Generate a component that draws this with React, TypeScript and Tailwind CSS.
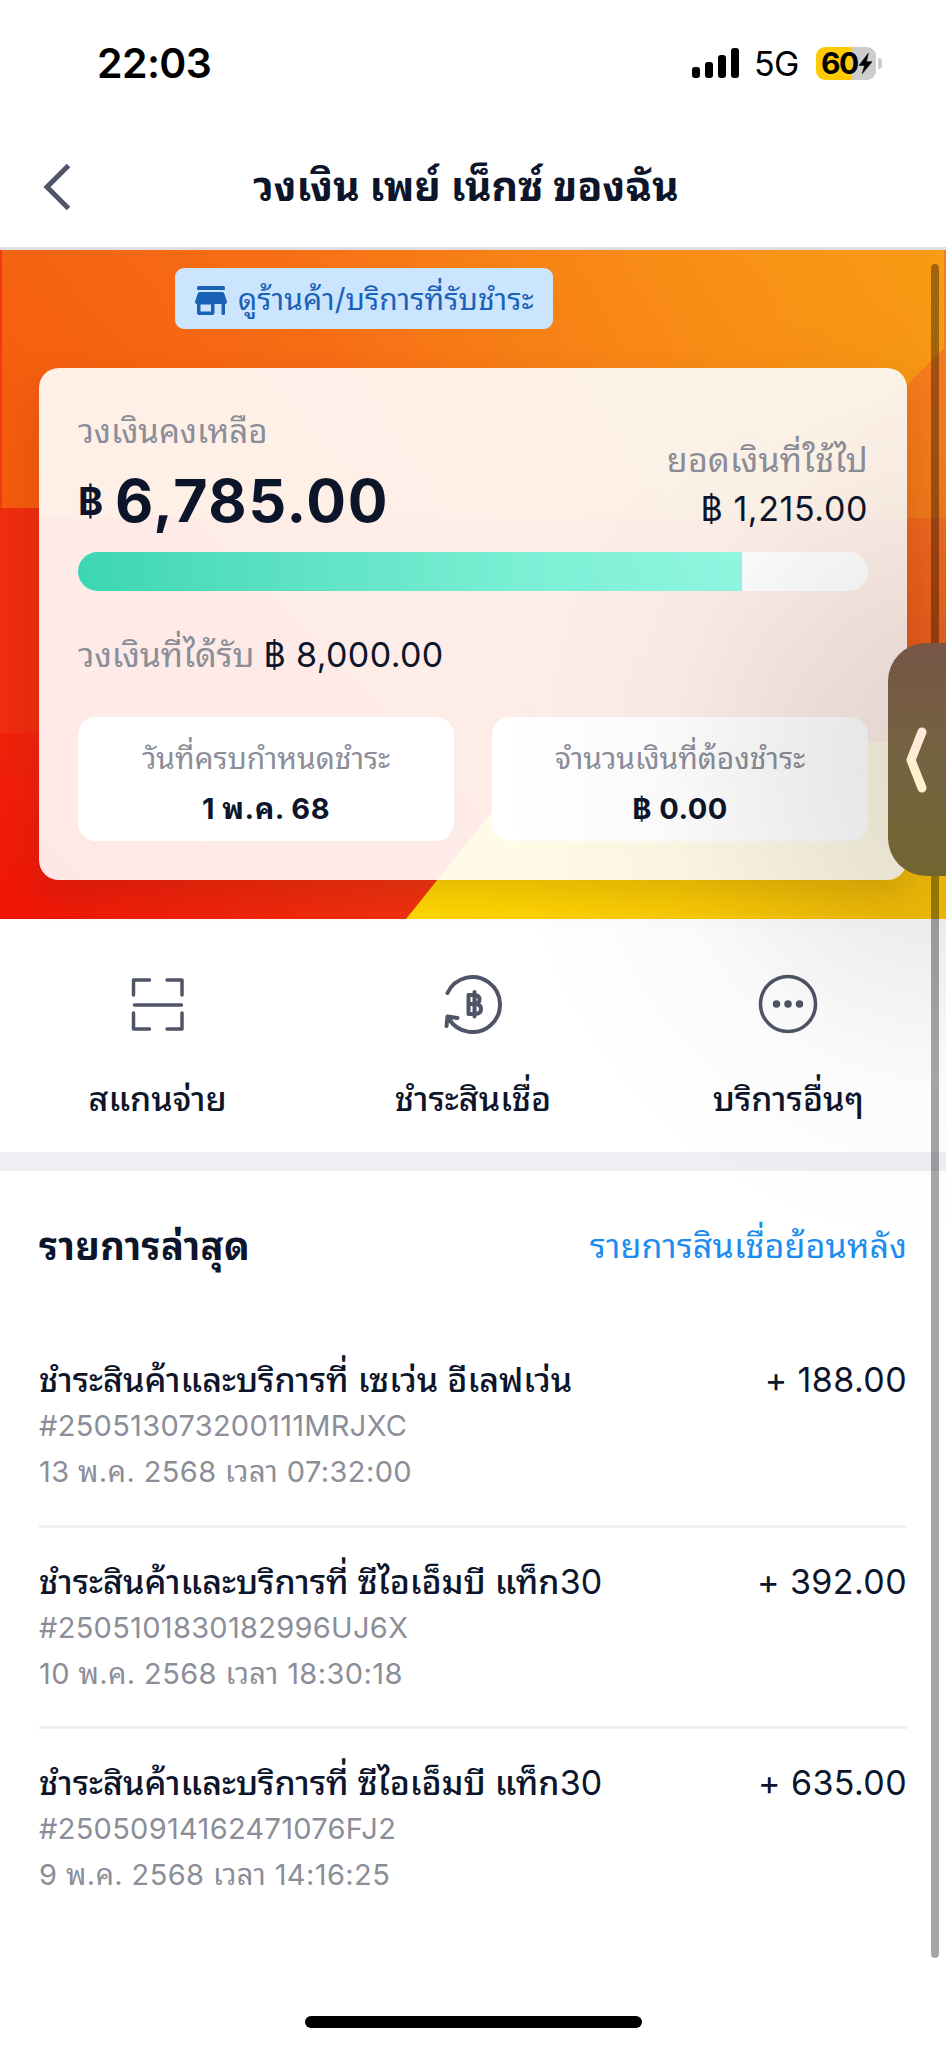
import type { ReactNode } from 'react';

interface Transaction {
  title: string;
  branch?: string;
  ref: string;
  date: string;
  amount: string;
}

const TRANSACTIONS: Transaction[] = [
  {
    title: 'ชำระสินค้าและบริการที่ เซเว่น อีเลฟเว่น',
    ref: '#250513073200111MRJXC',
    date: '13 พ.ค. 2568 เวลา 07:32:00',
    amount: '+ 188.00',
  },
  {
    title: 'ชำระสินค้าและบริการที่ ซีไอเอ็มบี แท็ก',
    branch: '30',
    ref: '#2505101830182996UJ6X',
    date: '10 พ.ค. 2568 เวลา 18:30:18',
    amount: '+ 392.00',
  },
  {
    title: 'ชำระสินค้าและบริการที่ ซีไอเอ็มบี แท็ก',
    branch: '30',
    ref: '#25050914162471076FJ2',
    date: '9 พ.ค. 2568 เวลา 14:16:25',
    amount: '+ 635.00',
  },
];

const LIMIT = 8000;
const REMAINING = 6785;

function StatusBar() {
  return (
    <div className="flex h-[126px] items-center justify-between pr-[64px] pl-[97px] text-black">
      <span className="text-[41px] leading-none font-semibold tracking-[-0.6px]">22:03</span>
      <div className="flex items-center">
        <div className="flex h-[30px] items-end gap-[5px]">
          <span className="h-[11px] w-[8px] rounded-[3px] bg-black" />
          <span className="h-[16px] w-[8px] rounded-[3px] bg-black" />
          <span className="h-[23px] w-[8px] rounded-[3px] bg-black" />
          <span className="h-[30px] w-[8px] rounded-[3px] bg-black" />
        </div>
        <span className="ml-[15px] w-[62px] pt-[2px] text-[34px] leading-none tracking-[-0.6px]">5G</span>
        <div className="flex h-[33px] w-[60px] items-center rounded-[9px] bg-[linear-gradient(90deg,#ffcb05_60%,#cdcdcd_60%)] pl-[5px]">
          <span className="text-[30px] leading-none font-bold tracking-[-1.6px]">60</span>
          <svg viewBox="0 0 16 24" className="h-[23px] w-[15px]">
            <path d="M11 1 1 14h6L4.500 23 15 10H9z" fill="black" stroke="black" strokeWidth="0.600" strokeLinejoin="round" />
          </svg>
        </div>
        <span className="ml-[2px] h-[11px] w-[4px] rounded-r-full bg-[#cdcdcd]" />
      </div>
    </div>
  );
}

function Header() {
  return (
    <header className="grid h-[124px] grid-cols-[120px_1fr_120px] items-center border-b-[3px] border-[#dcdfe8]">
      <button className="pl-[42px]">
        <svg viewBox="0 0 30 48" className="h-[48px] w-[30px]" fill="none" stroke="#4f5466" strokeWidth="5">
          <path d="M26.500 2.500 5 24l21.500 21.500" />
        </svg>
      </button>
      <h1 className="-ml-[14px] text-center text-[41px] leading-none font-bold whitespace-nowrap">
        วงเงิน เพย์ เน็กซ์ ของฉัน
      </h1>
    </header>
  );
}

// Layered colour planes behind the credit card
function HeroArt() {
  return (
    <svg viewBox="0 0 946 669" preserveAspectRatio="none" className="absolute inset-0 h-full w-full">
      <defs>
        <linearGradient id="top" x1="0" y1="268" x2="620" y2="-300" gradientUnits="userSpaceOnUse">
          <stop offset="0" stopColor="#f4580e" />
          <stop offset="0.500" stopColor="#f77016" />
          <stop offset="1" stopColor="#f88417" />
        </linearGradient>
        <linearGradient id="topRight" x1="400" y1="260" x2="946" y2="0" gradientUnits="userSpaceOnUse">
          <stop offset="0" stopColor="#f89615" stopOpacity="0" />
          <stop offset="1" stopColor="#f99b13" />
        </linearGradient>
        <linearGradient id="red" x1="0" y1="1" x2="1" y2="0.300">
          <stop offset="0" stopColor="#f01508" />
          <stop offset="0.400" stopColor="#f03a12" />
          <stop offset="1" stopColor="#f57020" />
        </linearGradient>
        <linearGradient id="yellow" x1="0" y1="0" x2="1" y2="0">
          <stop offset="0" stopColor="#ffd800" />
          <stop offset="1" stopColor="#fbc309" />
        </linearGradient>
      </defs>
      <rect width="946" height="669" fill="url(#red)" />
      <rect y="258" width="39" height="225" fill="#f02c10" />
      <path d="M0 0H946V268H39V258H0z" fill="url(#top)" />
      <path d="M0 0H946V268H39V258H0z" fill="url(#topRight)" />
      <path d="M0 0H2V258H0z" fill="#f23a10" />
      <path d="M946 96 774 268h172z" fill="#f77b1c" />
      <path d="M944 0h2v96h-2z" fill="#f77b1c" />
      <path d="M406 669 548 492H946V669z" fill="url(#yellow)" />
    </svg>
  );
}

function StoreIcon() {
  return (
    <svg viewBox="0 0 32 29" className="h-[29px] w-[32px]" fill="#1a62b8">
      <rect x="2" y="0" width="28" height="4" rx="1.500" />
      <path d="M5 6h22q2 0 2.500 2L32 16q0 2-1.500 2h-29Q0 18 0 16l2.500-8Q3 6 5 6z" />
      <path
        fillRule="evenodd"
        d="M2 17h17.500v10q0 2-2 2H4q-2 0-2-2zM5.500 18.500v7H16v-7zM26.500 17H30v10.500q0 1.500-1.750 1.500t-1.750-1.500z"
      />
    </svg>
  );
}

function InfoBox({ label, value }: { label: string; value: string }) {
  return (
    <div className="flex h-[124px] flex-1 flex-col items-center gap-[11px] rounded-[18px] bg-white pt-[21px]">
      <span className="text-[30px] leading-[40px] tracking-[-0.1px] whitespace-nowrap text-[#8b8e99]">{label}</span>
      <span className="text-[29px] leading-[40px] font-bold tracking-[0.5px] whitespace-nowrap">{value}</span>
    </div>
  );
}

function CreditCard() {
  return (
    <div className="relative mx-[39px] mt-[39px] h-[512px] rounded-[20px] bg-white/90 px-[39px] pt-[41px] shadow-[0_16px_36px_rgba(60,20,0,0.140)]">
      <div className="flex items-end justify-between">
        <div>
          <p className="text-[33px] leading-[44px] text-[#8b8e99]">วงเงินคงเหลือ</p>
          <p className="mt-[17px] flex h-[61px] items-center font-bold">
            <span className="w-[37px] text-[38px] leading-none">฿</span>
            <span className="text-[59px] leading-none tracking-[1.7px]">6,785.00</span>
          </p>
        </div>
        <div className="text-right">
          <p className="text-[34px] leading-[44px] tracking-[0.2px] text-[#8b8e99]">ยอดเงินที่ใช้ไป</p>
          <p className="mt-[5px] text-[34px] leading-[44px] tracking-[0.6px]">฿ 1,215.00</p>
        </div>
      </div>

      <div className="mt-[21px] h-[39px] overflow-hidden rounded-full bg-white">
        <div
          className="h-full bg-gradient-to-r from-[#3bd6b3] to-[#93fbe5]"
          style={{ width: `${(REMAINING / LIMIT) * 99.1}%` }}
        />
      </div>

      <p className="mt-[42px] flex gap-[9px] text-[34px] leading-[44px]">
        <span className="tracking-[-0.1px] text-[#8b8e99]">วงเงินที่ได้รับ</span>
        <span className="tracking-[0.4px]">฿ 8,000.00</span>
      </p>

      <div className="mt-[40px] flex gap-[38px]">
        <InfoBox label="วันที่ครบกำหนดชำระ" value="1 พ.ค. 68" />
        <InfoBox label="จำนวนเงินที่ต้องชำระ" value="฿ 0.00" />
      </div>
    </div>
  );
}

function Action({ label, children }: { label: string; children: ReactNode }) {
  return (
    <button className="flex flex-1 flex-col items-center gap-[43px] pt-[55px]">
      <svg viewBox="0 0 60 60" className="h-[60px] w-[60px]" fill="none" stroke="#4f5466" strokeWidth="3.500" strokeLinecap="round" strokeLinejoin="round">
        {children}
      </svg>
      <span className="text-[34px] leading-[44px] font-medium whitespace-nowrap">{label}</span>
    </button>
  );
}

function TransactionRow({ item, last }: { item: Transaction; last: boolean }) {
  return (
    <li className={`flex h-[201.5px] justify-between pt-[31px] ${last ? '' : 'border-b-[3px] border-[#f0f0f2]'}`}>
      <div className="leading-[46px] whitespace-nowrap">
        <p className="text-[34px] font-medium">
          {item.title}
          {item.branch && <span className="font-normal">{item.branch}</span>}
        </p>
        <p className="text-[29px] tracking-[0.3px] text-[#8b8e99]">{item.ref}</p>
        <p className="text-[29px] tracking-[0.4px] text-[#8b8e99]">{item.date}</p>
      </div>
      <span className="text-[34px] leading-[46px] tracking-[0.4px] whitespace-nowrap">{item.amount}</span>
    </li>
  );
}

export default function App() {
  return (
    <div className="relative flex h-[2048px] w-[946px] flex-col overflow-hidden bg-white font-[Inter,'Noto_Sans_Thai_Looped','Noto_Sans_Thai',sans-serif] text-[#0d152b]">
      <StatusBar />
      <Header />

      <section className="relative h-[669px] pt-[18px]">
        <HeroArt />
        <button className="relative ml-[175px] flex h-[61px] w-[378px] items-center gap-[11px] rounded-[9px] bg-[#cce5ff] pt-[3px] pl-[20px] text-[#1a62b8]">
          <StoreIcon />
          <span className="-mt-[3px] text-[30px] leading-none tracking-[0.1px] whitespace-nowrap">
            ดูร้านค้า/บริการที่รับชำระ
          </span>
        </button>
        <CreditCard />
      </section>

      <nav className="flex h-[233px]">
        <Action label="สแกนจ่าย">
          <path d="M5.500 21V6h16M39 6h15v15M5.500 39v16h16M39 55h15V39M6.500 31h47" />
        </Action>
        <Action label="ชำระสินเชื่อ">
          <path d="M4.500 19A27.500 27.500 0 1 1 5.500 44M14.500 44 4.500 42.500 3.500 52" strokeWidth="4" />
          <path d="M25.500 21h5.500q5.500 0 5.500 4.500T31 30h-5.500zM25.500 30H32q6 0 6 5t-6 5h-6.500zM31.500 18v24.500" strokeWidth="4" />
        </Action>
        <Action label="บริการอื่นๆ">
          <circle cx="30" cy="30" r="27.500" />
          <path d="M18.500 30h.010M30 30h.010M41.500 30h.010" strokeWidth="7.500" />
        </Action>
      </nav>
      <div className="h-[19px] bg-[#eeeff4]" />

      <section className="px-[39px]">
        <div className="flex h-[155px] items-center justify-between pb-[6px] leading-[46px]">
          <h2 className="text-[38px] font-bold tracking-[0.3px]">รายการล่าสุด</h2>
          <a className="text-[34px] tracking-[0.15px] text-[#1c8df0]">รายการสินเชื่อย้อนหลัง</a>
        </div>
        <ul>
          {TRANSACTIONS.map((item, i) => (
            <TransactionRow key={item.ref} item={item} last={i === TRANSACTIONS.length - 1} />
          ))}
        </ul>
      </section>

      <div className="mx-auto mt-auto mb-[20px] h-[12px] w-[337px] rounded-full bg-black" />

      {/* Soft shade cast by the side drawer */}
      <div className="pointer-events-none absolute top-[250px] right-0 h-[1050px] w-[500px] bg-[radial-gradient(ellipse_450px_490px_at_100%_49%,rgba(0,0,0,0.120)_0%,rgba(0,0,0,0.080)_30%,rgba(0,0,0,0.020)_64%,transparent_100%)]" />
      <div className="absolute top-[264px] right-[7px] h-[1694px] w-[8px] rounded-full bg-black/35" />

      <button className="absolute top-[643px] right-0 flex h-[233px] w-[58px] items-center rounded-l-[38px] bg-gradient-to-b from-[#775546] via-[#746340] via-50% to-[#726531] pl-[16px]">
        <svg viewBox="0 0 26 70" className="h-[70px] w-[26px]" fill="none" strokeWidth="9" strokeLinecap="round" strokeLinejoin="round">
          <defs>
            <linearGradient id="arrow" x1="0" y1="0" x2="0" y2="1">
              <stop offset="0" stopColor="#ffe8d8" />
              <stop offset="1" stopColor="#fff3cc" />
            </linearGradient>
          </defs>
          <path d="M18 7 7 35l11 28" stroke="url(#arrow)" />
        </svg>
      </button>
    </div>
  );
}
